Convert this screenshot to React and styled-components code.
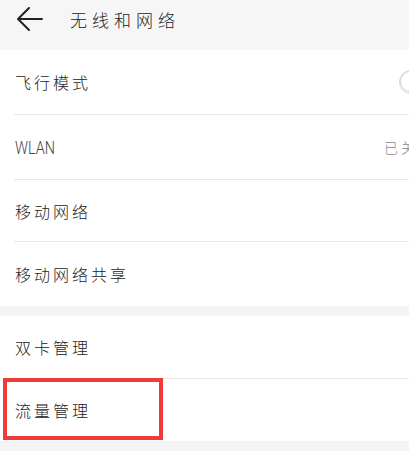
import React from "react";
import styled, { createGlobalStyle } from "styled-components";

const Global = createGlobalStyle`
  html, body {
    margin: 0;
    padding: 0;
    overflow: hidden;
    background: #f4f4f4;
  }
  body {
    font-family: "Noto Sans CJK SC", "Noto Sans", sans-serif;
  }
`;

const Screen = styled.div`
  width: 450px;
  height: 451px;
  background: #f4f4f4;
`;

const Header = styled.div`
  height: 50px;
  display: flex;
  align-items: flex-start;
  padding-top: 5px;
  box-sizing: border-box;
  background: #f6f6f6;
`;

const Back = styled.div`
  width: 70px;
  height: 28px;
  display: flex;
  align-items: center;
  padding-left: 16px;
  box-sizing: border-box;
`;

const Title = styled.div`
  font-size: 17px;
  font-weight: 300;
  letter-spacing: 5px;
  line-height: 30px;
  color: #222;
`;

const Section = styled.div`
  background: #fff;
  margin-bottom: ${(p) => p.gap || 0}px;
`;

const Row = styled.div`
  position: relative;
  height: ${(p) => p.h || 63}px;
  display: flex;
  align-items: center;
  justify-content: space-between;
  padding: 0 15px;
  &::before {
    content: "";
    display: ${(p) => (p.first ? "none" : "block")};
    position: absolute;
    top: -1px;
    left: 14px;
    right: 0;
    height: 1px;
    background: #e8e8e8;
  }
  & + & {
    margin-top: 1px;
  }
`;

const Label = styled.span`
  font-size: 16px;
  font-weight: 300;
  letter-spacing: 3px;
  color: #222;
`;

const LatinLabel = styled.span`
  display: inline-block;
  font-family: "Roboto", "Noto Sans", sans-serif;
  font-size: 19px;
  font-weight: 300;
  color: #444;
  transform: scaleX(0.76);
  transform-origin: left center;
`;

const Status = styled.span`
  font-size: 14px;
  font-weight: 300;
  letter-spacing: 3px;
  color: #888;
`;

const Switch = styled.div`
  width: 38px;
  height: 24px;
  border-radius: 12px;
  border: 1.5px solid #d4d4d4;
  box-sizing: border-box;
  position: relative;
  margin-right: -2px;
  &::after {
    content: "";
    position: absolute;
    left: 0;
    top: 0;
    width: 21px;
    height: 21px;
    border-radius: 50%;
    border: 1.5px solid #d4d4d4;
    box-sizing: border-box;
    background: #fff;
  }
`;

const Highlight = styled.div`
  position: absolute;
  left: 3px;
  top: -1px;
  width: 160px;
  height: 62px;
  border: 4px solid #f23a3a;
  box-sizing: border-box;
  pointer-events: none;
`;

const BackArrow = () => (
  <svg width="28" height="26" viewBox="0 0 28 26" fill="none">
    <path
      d="M26 13H3M13 2L2 13l11 11"
      stroke="#222"
      strokeWidth="2"
      strokeLinecap="round"
      strokeLinejoin="round"
    />
  </svg>
);

export default function App() {
  return (
    <>
      <Global />
      <Screen>
        <Header>
          <Back>
            <BackArrow />
          </Back>
          <Title>无线和网络</Title>
        </Header>
        <Section gap={10}>
          <Row first h={64}>
            <Label>飞行模式</Label>
            <Switch />
          </Row>
          <Row h={64}>
            <LatinLabel>WLAN</LatinLabel>
            <Status>已关闭</Status>
          </Row>
          <Row h={61}>
            <Label>移动网络</Label>
          </Row>
          <Row h={64}>
            <Label>移动网络共享</Label>
          </Row>
        </Section>
        <Section>
          <Row first h={62}>
            <Label>双卡管理</Label>
          </Row>
          <Row h={62}>
            <Label>流量管理</Label>
            <Highlight />
          </Row>
        </Section>
      </Screen>
    </>
  );
}
